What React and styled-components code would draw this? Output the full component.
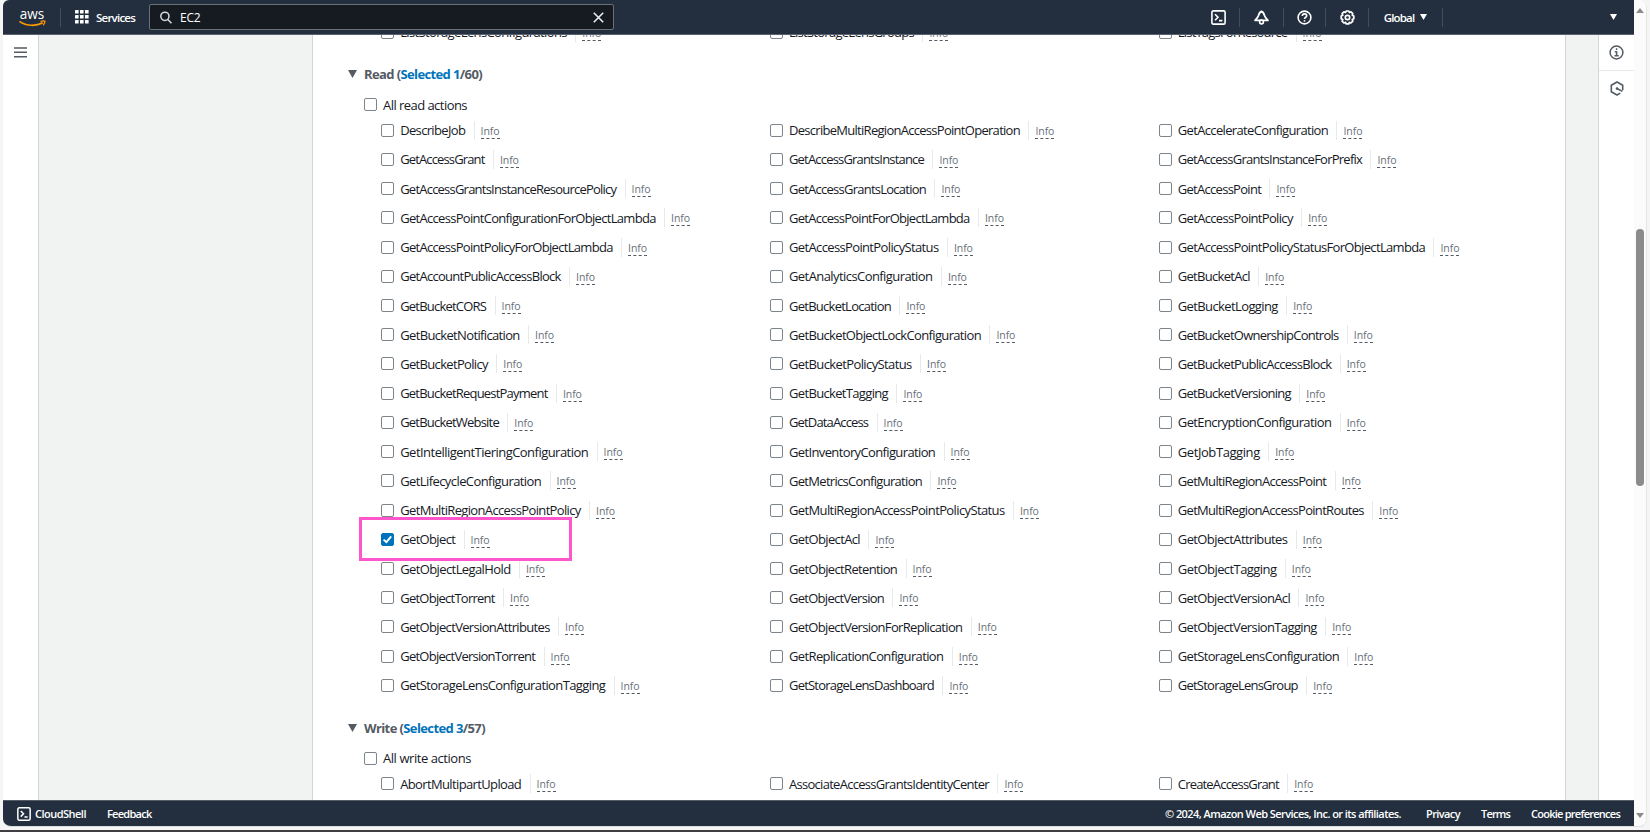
import React, { useLayoutEffect, useRef, useState } from "react";
import styled, { createGlobalStyle, css } from "styled-components";

const GlobalStyle = createGlobalStyle`
  *, *::before, *::after { box-sizing: border-box; }
  html, body { margin: 0; padding: 0; }
  body {
    width: 1650px;
    height: 832px;
    overflow: hidden;
    background: #f3f3f3;
    font-family: "Open Sans", "Noto Sans", sans-serif;
    font-stretch: 88%;
    font-size: 13px;
    font-weight: 460;
    color: #16191f;
  }
`;

const Screen = styled.div`
  width: 1650px;
  height: 832px;
  padding-left: 3px;
  border-bottom: 2px solid #3f3d40;
  background: #f5f5f5;
`;

const Browser = styled.div`
  display: flex;
  width: 1644px;
  height: 827px;
  border-right: 1px solid #e6e6e6;
  border-bottom: 1px solid #dcdcdc;
  border-radius: 6px 8px 8px 8px;
  overflow: hidden;
  background: #fff;
`;

const Page = styled.div`
  display: flex;
  flex-direction: column;
  width: 1631px;
  height: 826px;
`;

const Header = styled.header`
  display: flex;
  align-items: center;
  flex: none;
  height: 35px;
  background: #232f3e;
  border-bottom: 1px solid #59626e;
  color: #fff;
  font-size: 11.5px;
  font-weight: 600;
`;

const LogoLink = styled.div`
  display: flex;
  width: 57px;
  padding-left: 16px;
`;

const Divider = styled.span`
  flex: none;
  width: 1px;
  height: 19px;
  background: #414d5c;
`;

const ServicesButton = styled.div`
  display: flex;
  align-items: center;
  gap: 7px;
  width: 88px;
  padding-left: 14px;
`;

const SearchBox = styled.div`
  display: flex;
  align-items: center;
  width: 465px;
  height: 26px;
  padding: 0 9px 0 10px;
  border: 1px solid #687078;
  border-radius: 2px;
  background: #161a21;
`;

const SearchValue = styled.span`
  flex: 1;
  padding-left: 8px;
  font-size: 12px;
  font-weight: 500;
`;

const HeaderTools = styled.div`
  display: flex;
  align-items: center;
  margin-left: auto;
`;

const ToolButton = styled.div`
  display: flex;
  align-items: center;
  justify-content: center;
  gap: 6px;
  width: ${(p) => p.$width}px;
`;

const AccountMenu = styled.div`
  display: flex;
  justify-content: flex-end;
  width: 191px;
  padding-right: 17px;
`;

const Body = styled.div`
  display: flex;
  flex: none;
  height: 765px;
  background: #f1f3f3;
`;

const LeftRail = styled.nav`
  display: flex;
  width: 36px;
  padding: 11px 0 0 11px;
  background: #fff;
  border-right: 1px solid #d0d6d6;
`;

const RightRail = styled.aside`
  width: 36px;
  margin-left: auto;
  background: #fff;
  border-left: 1px solid #cfd6d6;
`;

const RailButton = styled.div`
  display: flex;
  justify-content: center;
  align-items: center;
  height: ${(p) => (p.$ruled ? 36 : 34)}px;
  border-bottom: ${(p) => (p.$ruled ? "1px solid #e3e8e8" : "none")};
`;

const Content = styled.main`
  width: 1254px;
  margin-left: 273px;
  padding-left: 35px;
  background: #fff;
  border: solid #d0d6d6;
  border-width: 0 1px;
  overflow: hidden;
`;

const GroupTitle = styled.div`
  display: flex;
  align-items: center;
  gap: 7px;
  height: 23px;
  margin-top: 16px;
  color: #545b64;
  font-weight: 660;
`;

const Selected = styled.span`
  color: #0073bb;
`;

const AllRow = styled.label`
  display: flex;
  align-items: center;
  gap: 6px;
  height: 20px;
  margin: 9px 0 1px;
  padding-left: 16px;
`;

const ActionGrid = styled.div`
  display: grid;
  grid-template-columns: repeat(3, 388.8px);
  grid-auto-rows: 29.23px;
  margin-left: 33px;
  ${(p) =>
    p.$scrolled &&
    css`
      margin-top: -17.6px;
    `}
`;

const Action = styled.div`
  position: relative;
  display: flex;
  align-items: center;
  z-index: ${(p) => (p.$raised ? 1 : "auto")};
`;

const ActionName = styled.span`
  margin: 0 8.4px 0 6.2px;
`;

const CheckSquare = styled.span`
  display: flex;
  flex: none;
  width: 13px;
  height: 13px;
  border: 1px solid ${(p) => (p.$on ? "#0073bb" : "#7d858c")};
  border-radius: 2px;
  background: ${(p) => (p.$on ? "#0073bb" : "#fff")};
`;

const InfoCell = styled.span`
  display: flex;
  height: 19px;
  padding: 1px 0 0 6px;
  border-left: 1px solid #e6eaea;
`;

const InfoLink = styled.span`
  height: 17px;
  line-height: 18px;
  font-size: 10.5px;
  color: #687078;
  border-bottom: 1px dashed #545b64;
`;

const Marker = styled.div`
  position: absolute;
  left: -22px;
  top: -8px;
  width: 213px;
  height: 44px;
  border: 3px solid #ff57cb;
`;

const Fitted = styled.span`
  display: inline-block;
  white-space: nowrap;
`;

const Footer = styled.footer`
  display: flex;
  align-items: center;
  flex: none;
  height: 26px;
  padding: 0 14px 0 14px;
  background: #232f3e;
  border-top: 1px solid #545b64;
  color: #fff;
  font-size: 11px;
  font-weight: 600;
`;

const ShellLink = styled.div`
  display: flex;
  align-items: center;
  gap: 4px;
  margin-right: 21px;
`;

const Legal = styled.div`
  display: flex;
  gap: 21px;
  margin-left: auto;
`;

const Copyright = styled.span`
  margin-right: 4px;
`;

const Scrollbar = styled.div`
  display: flex;
  flex-direction: column;
  align-items: center;
  width: 12px;
  padding: 8px 0;
  background: #fbfbfb;
`;

const Thumb = styled.div`
  width: 8px;
  height: 257px;
  margin: 216px 0 auto;
  border-radius: 4px;
  background: #8b8b8b;
`;

function Fit({ width, children }) {
  const ref = useRef(null);
  const [spacing, setSpacing] = useState(0);
  useLayoutEffect(() => {
    const el = ref.current;
    const natural = el.firstChild.getBoundingClientRect().width;
    setSpacing((width - natural) / el.textContent.length);
  }, [width]);
  return (
    <Fitted ref={ref} style={{ width, letterSpacing: `${spacing}px` }}>
      <span>{children}</span>
    </Fitted>
  );
}

const LIST_ACTIONS = [
  ["ListStorageLensConfigurations", 166.7],
  ["ListStorageLensGroups", 125],
  ["ListTagsForResource", 109.4],
];

const READ_ACTIONS = [
  ["DescribeJob", 65], ["DescribeMultiRegionAccessPointOperation", 231], ["GetAccelerateConfiguration", 150.3],
  ["GetAccessGrant", 84.3], ["GetAccessGrantsInstance", 135], ["GetAccessGrantsInstanceForPrefix", 184.3],
  ["GetAccessGrantsInstanceResourcePolicy", 216], ["GetAccessGrantsLocation", 137], ["GetAccessPoint", 83.3],
  ["GetAccessPointConfigurationForObjectLambda", 255.5], ["GetAccessPointForObjectLambda", 180.6], ["GetAccessPointPolicy", 115],
  ["GetAccessPointPolicyForObjectLambda", 212.5], ["GetAccessPointPolicyStatus", 149.5], ["GetAccessPointPolicyStatusForObjectLambda", 247.3],
  ["GetAccountPublicAccessBlock", 160.5], ["GetAnalyticsConfiguration", 143.5], ["GetBucketAcl", 72],
  ["GetBucketCORS", 86], ["GetBucketLocation", 102], ["GetBucketLogging", 100],
  ["GetBucketNotification", 119.5], ["GetBucketObjectLockConfiguration", 192], ["GetBucketOwnershipControls", 160.7],
  ["GetBucketPolicy", 87.7], ["GetBucketPolicyStatus", 122.7], ["GetBucketPublicAccessBlock", 153.5],
  ["GetBucketRequestPayment", 147.3], ["GetBucketTagging", 99], ["GetBucketVersioning", 113.2],
  ["GetBucketWebsite", 98.7], ["GetDataAccess", 79.2], ["GetEncryptionConfiguration", 153.5],
  ["GetIntelligentTieringConfiguration", 188], ["GetInventoryConfiguration", 146.2], ["GetJobTagging", 82],
  ["GetLifecycleConfiguration", 141], ["GetMetricsConfiguration", 133.1], ["GetMultiRegionAccessPoint", 148.5],
  ["GetMultiRegionAccessPointPolicy", 180.5], ["GetMultiRegionAccessPointPolicyStatus", 215.5], ["GetMultiRegionAccessPointRoutes", 186.1],
  ["GetObject", 55, true], ["GetObjectAcl", 71], ["GetObjectAttributes", 109.6],
  ["GetObjectLegalHold", 110.3], ["GetObjectRetention", 108.2], ["GetObjectTagging", 98.7],
  ["GetObjectTorrent", 94.5], ["GetObjectVersion", 95.1], ["GetObjectVersionAcl", 112.3],
  ["GetObjectVersionAttributes", 149.5], ["GetObjectVersionForReplication", 173.4], ["GetObjectVersionTagging", 139],
  ["GetObjectVersionTorrent", 135], ["GetReplicationConfiguration", 154.4], ["GetStorageLensConfiguration", 161.2],
  ["GetStorageLensConfigurationTagging", 205], ["GetStorageLensDashboard", 145], ["GetStorageLensGroup", 120],
];

const WRITE_ACTIONS = [
  ["AbortMultipartUpload", 121],
  ["AssociateAccessGrantsIdentityCenter", 200],
  ["CreateAccessGrant", 101],
];

function Checkbox({ on }) {
  return (
    <CheckSquare $on={on}>
      {on && (
        <svg width="11" height="11" viewBox="0 0 11 11" fill="none" stroke="#fff" strokeWidth="1.9">
          <path d="M1.6 5.6 4.4 8.2 9.2 2.4" />
        </svg>
      )}
    </CheckSquare>
  );
}

function Actions({ items, scrolled }) {
  return (
    <ActionGrid $scrolled={scrolled}>
      {items.map(([name, width, on]) => (
        <Action key={name} $raised={on}>
          <Checkbox on={on} />
          <ActionName>
            <Fit width={width}>{name}</Fit>
          </ActionName>
          <InfoCell>
            <InfoLink>
              <Fit width={19}>Info</Fit>
            </InfoLink>
          </InfoCell>
          {on && <Marker />}
        </Action>
      ))}
    </ActionGrid>
  );
}

function Group({ title, width, selected, total, allLabel, allWidth, items }) {
  return (
    <section>
      <GroupTitle>
        <Caret width={9} height={8} color="#545b64" />
        <Fit width={width}>
          {title} (<Selected>Selected {selected}</Selected>/{total})
        </Fit>
      </GroupTitle>
      <AllRow>
        <Checkbox />
        <Fit width={allWidth}>{allLabel}</Fit>
      </AllRow>
      <Actions items={items} />
    </section>
  );
}

function Caret({ width = 7, height = 6, color = "#fff", up }) {
  return (
    <svg width={width} height={height} viewBox="0 0 10 8" preserveAspectRatio="none" fill={color}>
      <path d={up ? "M0 8H10L5 0Z" : "M0 0H10L5 8Z"} />
    </svg>
  );
}

function AwsLogo() {
  return (
    <svg width="28" height="24" viewBox="0 -6 28 24" overflow="visible">
      <text x="0.8" y="8.2" fill="#fff" fontFamily="Open Sans" fontSize="14" fontWeight="500" textLength="24.5" lengthAdjust="spacingAndGlyphs">
        aws
      </text>
      <path d="M.4 10.400c7.400 5.200 17 4.800 23.400 1.400" fill="none" stroke="#f90" strokeWidth="1.600" />
      <path d="M21.400 10.500c1.800-.8 3.600-.8 4.500-.4.100 1.300-.5 2.900-1.700 4.100" fill="none" stroke="#f90" strokeWidth="1.300" />
    </svg>
  );
}

function GridIcon() {
  return (
    <svg width="14" height="14" viewBox="0 0 14 14" fill="#fff">
      {[0, 5, 10].map((y) =>
        [0, 5, 10].map((x) => <rect key={`${x}-${y}`} x={x} y={y} width="3.6" height="3.6" rx=".4" />)
      )}
    </svg>
  );
}

function ShellIcon({ size = 15 }) {
  return (
    <svg width={size} height={size} viewBox="0 0 15 15" fill="none" stroke="#fff" strokeWidth="1.6">
      <rect x=".9" y=".9" width="13.2" height="13.2" rx="1.4" />
      <path d="M4 4.3 7 7.3 4 10.3M8 10.6h3.4" />
    </svg>
  );
}

function BellIcon() {
  return (
    <svg width="15" height="15" viewBox="0 0 15 15" fill="none" stroke="#fff" strokeWidth="1.8" strokeLinejoin="round">
      <path d="M7.500 1.500C5.800 1.900 5.200 3 4.600 5.200 4 7.200 2.900 8.600 1.100 10.400h12.800c-1.800-1.800-2.900-3.200-3.500-5.200C9.800 3 9.200 1.900 7.500 1.500Z" />
      <circle cx="7.500" cy="12" r="1.900" fill="#232f3e" strokeWidth="1.600" />
    </svg>
  );
}

function HelpIcon() {
  return (
    <svg width="15" height="15" viewBox="0 0 15 15" fill="none" stroke="#fff" strokeWidth="1.6">
      <circle cx="7.5" cy="7.5" r="6.4" />
      <path d="M5.3 6c.1-3 4.4-2.7 4.4-.3C9.700 7.300 7.500 7.200 7.500 9" />
      <path d="M7.500 10.200v1.500" />
    </svg>
  );
}

function GearIcon() {
  return (
    <svg width="15" height="15" viewBox="0 0 15 15" fill="none" stroke="#fff" strokeWidth="1.7" strokeLinejoin="round">
      <path d="M6.200 1h2.600l.6 1.500 1.600-.6 1.800 1.800-.6 1.600 1.600.8v2.600l-1.600.8.6 1.700-1.800 1.800-1.600-.6-.6 1.500H6.200l-.6-1.500-1.700.6-1.800-1.800.7-1.700L1.200 8.700V6.100l1.600-.8-.7-1.600 1.800-1.800 1.700.6Z" />
      <circle cx="7.500" cy="7.500" r="2.200" />
    </svg>
  );
}

function SearchIcon() {
  return (
    <svg width="12" height="13" viewBox="0 0 12 13" fill="none" stroke="#d5dbdb" strokeWidth="1.500">
      <circle cx="4.900" cy="5.300" r="4.100" />
      <path d="M7.800 8.400 11.500 12.200" />
    </svg>
  );
}

function CloseIcon() {
  return (
    <svg width="11" height="11" viewBox="0 0 11 11" stroke="#eaeded" strokeWidth="1.600">
      <path d="M.8.8 10.200 10.200M10.200.8.8 10.200" />
    </svg>
  );
}

function MenuIcon() {
  return (
    <svg width="13" height="12" viewBox="0 0 13 12" stroke="#545b64" strokeWidth="1.500">
      <path d="M0 1.900h13M0 6.300h13M0 10.700h13" />
    </svg>
  );
}

function InfoIcon() {
  return (
    <svg width="15" height="15" viewBox="0 0 15 15" fill="none" stroke="#545b64" strokeWidth="1.500">
      <circle cx="7.500" cy="7.500" r="6.400" />
      <path d="M7.600 3.300v1.800M5.800 6.700h1.800v4M5.500 10.800h4.200" />
    </svg>
  );
}

function HexIcon() {
  return (
    <svg width="14" height="15" viewBox="0 0 14 15" fill="none" stroke="#545b64" strokeWidth="1.600" strokeLinejoin="round">
      <path d="M12.700 9.200V4.200L7 1 1.300 4.200v6.600L7 14l3.300-1.900" />
      <path d="M7 7.500 12.400 10.400" />
      <circle cx="7" cy="7.500" r="1.300" fill="#545b64" stroke="none" />
    </svg>
  );
}

export default function App() {
  return (
    <Screen>
      <GlobalStyle />
      <Browser>
        <Page>
          <Header>
            <LogoLink><AwsLogo /></LogoLink>
            <Divider />
            <ServicesButton>
              <GridIcon />
              <Fit width={39}>Services</Fit>
            </ServicesButton>
            <SearchBox>
              <SearchIcon />
              <SearchValue><Fit width={20.500}>EC2</Fit></SearchValue>
              <CloseIcon />
            </SearchBox>
            <HeaderTools>
              <ToolButton $width={41}><ShellIcon /></ToolButton>
              <Divider />
              <ToolButton $width={43}><BellIcon /></ToolButton>
              <Divider />
              <ToolButton $width={41}><HelpIcon /></ToolButton>
              <Divider />
              <ToolButton $width={42}><GearIcon /></ToolButton>
              <Divider />
              <ToolButton $width={73}>
                <Fit width={30.500}>Global</Fit>
                <Caret />
              </ToolButton>
              <Divider />
              <AccountMenu><Caret /></AccountMenu>
            </HeaderTools>
          </Header>
          <Body>
            <LeftRail><MenuIcon /></LeftRail>
            <Content>
              <Actions items={LIST_ACTIONS} scrolled />
              <Group title="Read" width={118} selected={1} total={60} allLabel="All read actions" allWidth={84} items={READ_ACTIONS} />
              <Group title="Write" width={121} selected={3} total={57} allLabel="All write actions" allWidth={88} items={WRITE_ACTIONS} />
            </Content>
            <RightRail>
              <RailButton $ruled><InfoIcon /></RailButton>
              <RailButton><HexIcon /></RailButton>
            </RightRail>
          </Body>
          <Footer>
            <ShellLink>
              <ShellIcon size={14} />
              <Fit width={51}>CloudShell</Fit>
            </ShellLink>
            <Fit width={44.500}>Feedback</Fit>
            <Legal>
              <Copyright><Fit width={236}>© 2024, Amazon Web Services, Inc. or its affiliates.</Fit></Copyright>
              <Fit width={34}>Privacy</Fit>
              <Fit width={29}>Terms</Fit>
              <Fit width={89}>Cookie preferences</Fit>
            </Legal>
          </Footer>
        </Page>
        <Scrollbar>
          <Caret width={8} height={5} color="#8b8b8b" up />
          <Thumb />
          <Caret width={8} height={5} color="#8b8b8b" />
        </Scrollbar>
      </Browser>
    </Screen>
  );
}
